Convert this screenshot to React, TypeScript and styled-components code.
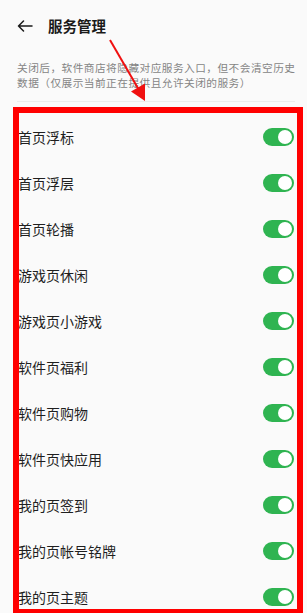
import React from "react";
import styled, { createGlobalStyle } from "styled-components";

const Global = createGlobalStyle`
  html, body { margin: 0; padding: 0; background: #fafafa; }
  body { font-family: "Noto Sans CJK SC", "Noto Sans", sans-serif; }
`;

const Page = styled.div`
  position: relative;
  width: 307px;
  height: 613px;
  overflow: hidden;
  background: #fafafa;
`;

const Header = styled.header`
  height: 50px;
  display: flex;
  align-items: center;
  gap: 15px;
  padding: 0 0 0 17px;
  box-sizing: border-box;
`;

const BackButton = styled.span`
  display: flex;
  width: 16px;
  height: 12px;
  margin-top: 1px;
`;

const Title = styled.h1`
  margin: 0;
  font-size: 14.5px;
  font-weight: 700;
  color: #1a1a1a;
  letter-spacing: 0;
`;

const Description = styled.p`
  margin: 10px 6px 0 17px;
  font-size: 10.7px;
  letter-spacing: 0.45px;
  line-height: 15px;
  color: #858585;
  word-break: break-all;
`;

const Divider = styled.div`
  margin: 11px 12px 0 17px;
  height: 1px;
  background: #ececec;
`;

const List = styled.ul`
  list-style: none;
  margin: 0;
  padding: 12px 0 0;
`;

const Row = styled.li`
  height: 46px;
  display: flex;
  align-items: center;
  justify-content: space-between;
  padding: 0 13px 0 18px;
`;

const Label = styled.span`
  font-size: 14px;
  color: #1f1f1f;
`;

const Toggle = styled.span<{ $on: boolean }>`
  position: relative;
  width: 31px;
  height: 18px;
  border-radius: 9px;
  background: ${(p) => (p.$on ? "#2fb451" : "#cccccc")};
  &::after {
    content: "";
    position: absolute;
    top: 2px;
    left: ${(p) => (p.$on ? "15px" : "2px")};
    width: 14px;
    height: 14px;
    border-radius: 50%;
    background: #fff;
  }
`;

const Highlight = styled.div`
  position: absolute;
  left: 13px;
  top: 107px;
  width: 290px;
  height: 508px;
  border: 6px solid #ff0000;
  box-sizing: border-box;
  pointer-events: none;
`;

const Annotation = styled.svg`
  position: absolute;
  left: 0;
  top: 0;
  pointer-events: none;
`;

const items = [
  "首页浮标",
  "首页浮层",
  "首页轮播",
  "游戏页休闲",
  "游戏页小游戏",
  "软件页福利",
  "软件页购物",
  "软件页快应用",
  "我的页签到",
  "我的页帐号铭牌",
  "我的页主题",
];

export default function App() {
  return (
    <>
      <Global />
      <Page>
        <Header>
          <BackButton>
            <svg width="16" height="12" viewBox="0 0 16 12" fill="none">
              <path d="M15 6H1.5M6.5 1L1.5 6l5 5" stroke="#1a1a1a" strokeWidth="1.5" strokeLinecap="round" strokeLinejoin="round" />
            </svg>
          </BackButton>
          <Title>服务管理</Title>
        </Header>
        <Description>
          关闭后，软件商店将隐藏对应服务入口，但不会清空历史数据（仅展示当前正在提供且允许关闭的服务）
        </Description>
        <Divider />
        <List>
          {items.map((t) => (
            <Row key={t}>
              <Label>{t}</Label>
              <Toggle $on={true} />
            </Row>
          ))}
        </List>
        <Highlight />
        <Annotation width="307" height="120" viewBox="0 0 307 120">
          <line x1="110" y1="40" x2="139" y2="90" stroke="#f01010" strokeWidth="2" />
          <polygon points="145,101 131,91.5 145,83.5" fill="#f01010" />
        </Annotation>
      </Page>
    </>
  );
}
